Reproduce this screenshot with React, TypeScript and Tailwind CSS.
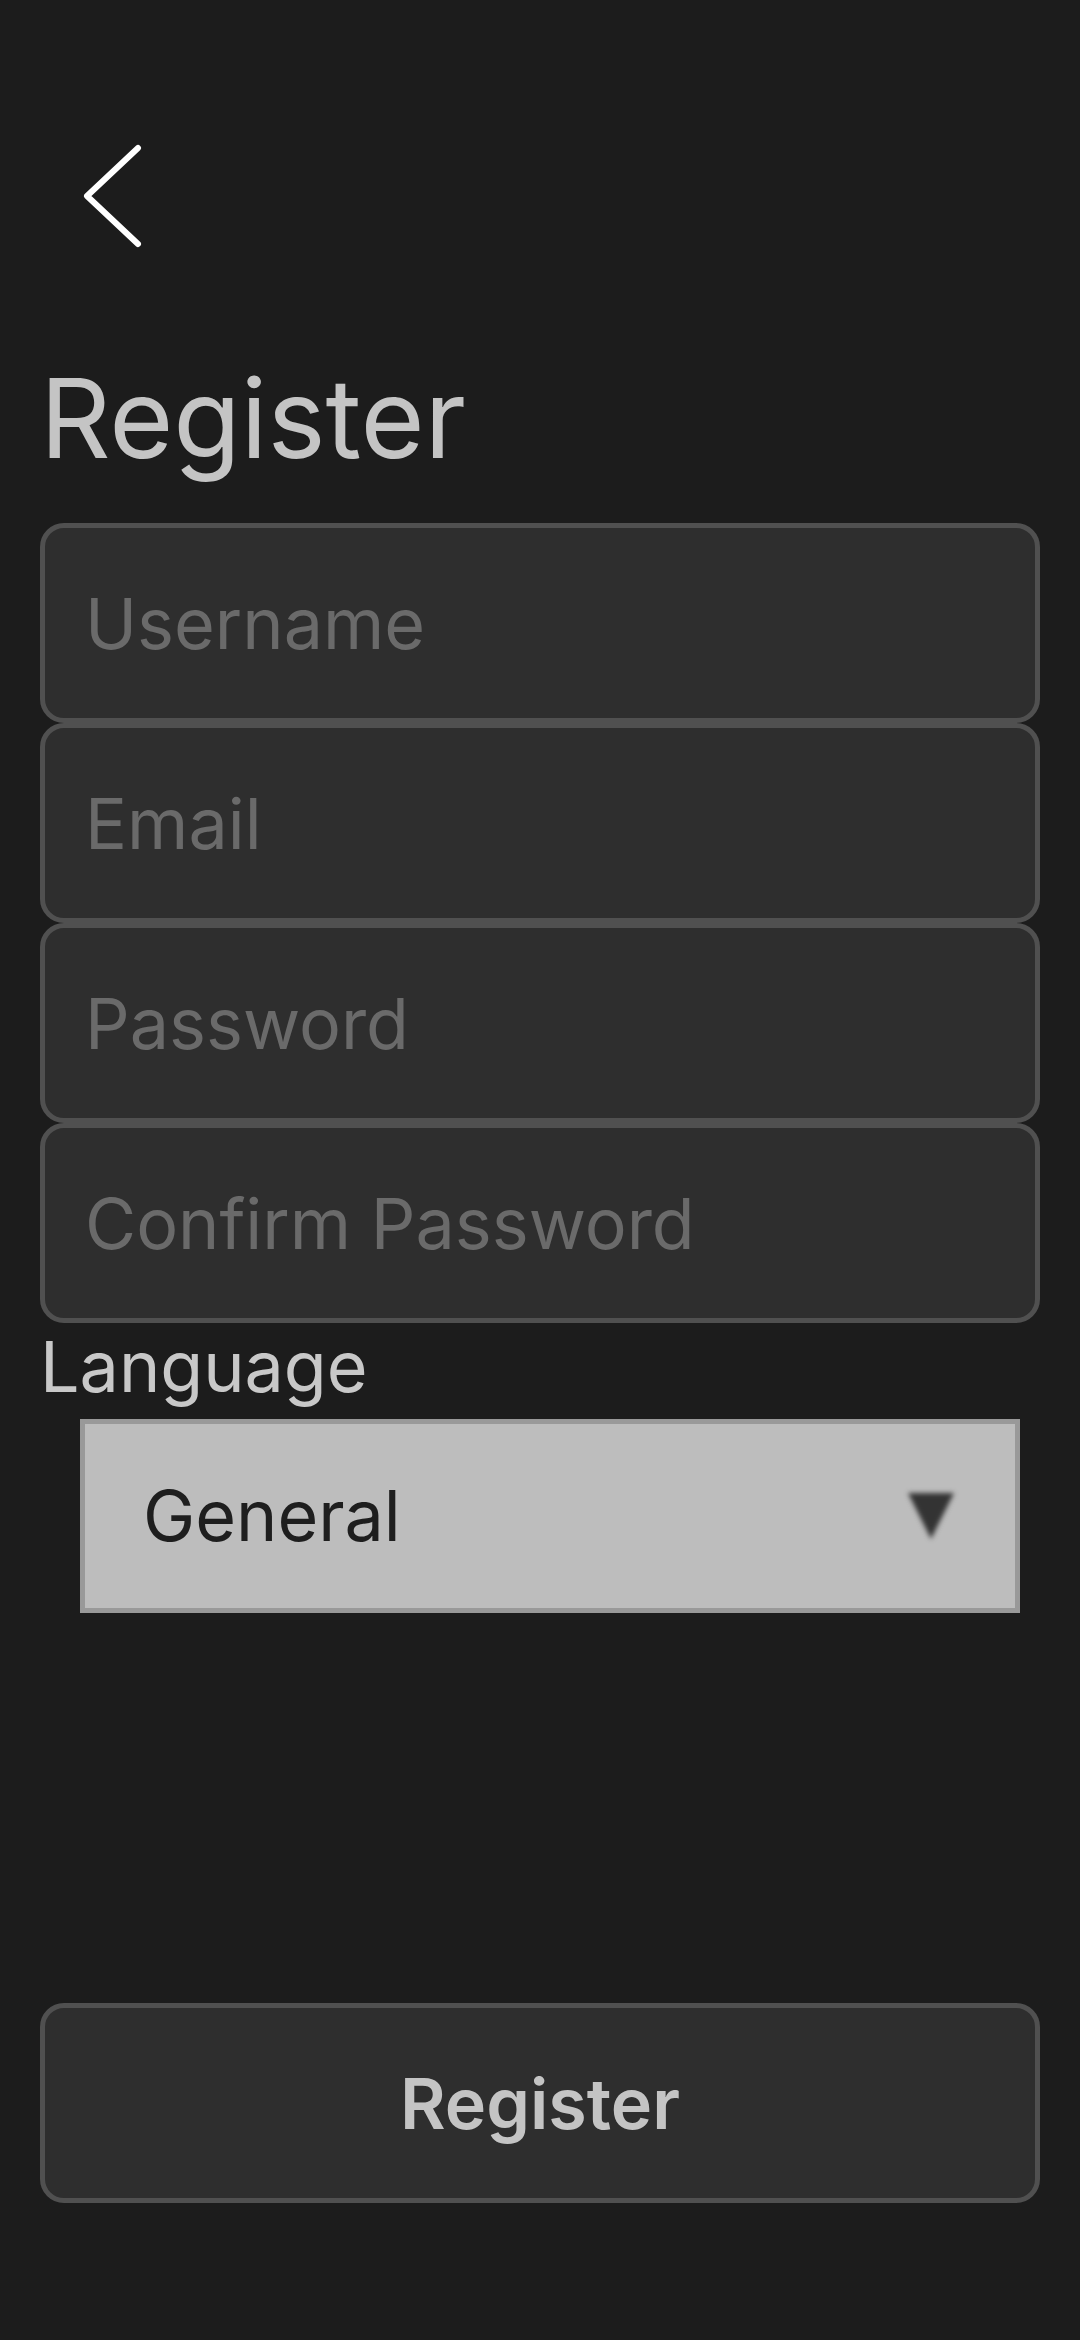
import { useState } from 'react';

const fields = ['Username', 'Email', 'Password', 'Confirm Password'];

export default function App() {
  const [values, setValues] = useState<Record<string, string>>({});

  return (
    <div className="min-h-screen w-full bg-[#1c1c1c] font-['Inter','Noto_Sans',sans-serif] px-[40px] flex flex-col">
      {/* Back */}
      <button className="mt-[144px] ml-[43px] w-[60px] h-[104px] self-start">
        <svg width="60" height="104" viewBox="0 0 60 104" fill="none">
          <polyline
            points="55,4 4,52 55,100"
            stroke="#ffffff"
            strokeWidth="6"
            strokeLinecap="round"
            strokeLinejoin="round"
          />
        </svg>
      </button>

      <h1 className="mt-[115px] text-[110px] leading-none text-[#c4c4c4] font-normal">Register</h1>

      {/* Fields */}
      <div className="mt-[50px] flex flex-col">
        {fields.map((f) => (
          <input
            key={f}
            type={f.includes('Password') ? 'password' : 'text'}
            placeholder={f}
            value={values[f] ?? ''}
            onChange={(e) => setValues({ ...values, [f]: e.target.value })}
            className="block w-full h-[200px] rounded-[24px] border-[5px] border-[#505050] bg-[#2e2e2e] px-[40px] text-[70px] text-[#c4c4c4] placeholder:text-[#6a6a6a] outline-none"
          />
        ))}
      </div>

      <p className="mt-[9px] text-[70px] leading-none text-[#c8c8c8]">Language</p>

      {/* Select */}
      <div className="mt-[17px] ml-[40px] mr-[20px] h-[194px] border-[5px] border-[#999999] bg-[#bdbdbd] flex items-center justify-between pl-[58px] pr-[58px]">
        <span className="text-[70px] leading-none text-[#1e1e1e]">General</span>
        <svg width="52" height="52" viewBox="0 0 52 52" className="blur-[2.5px]">
          <polygon points="3,3 49,3 26,49" fill="#333333" />
        </svg>
      </div>

      {/* Submit */}
      <button className="mt-[390px] h-[200px] w-full rounded-[24px] border-[5px] border-[#505050] bg-[#2e2e2e] text-[70px] font-semibold text-[#c4c4c4]">
        Register
      </button>
    </div>
  );
}
